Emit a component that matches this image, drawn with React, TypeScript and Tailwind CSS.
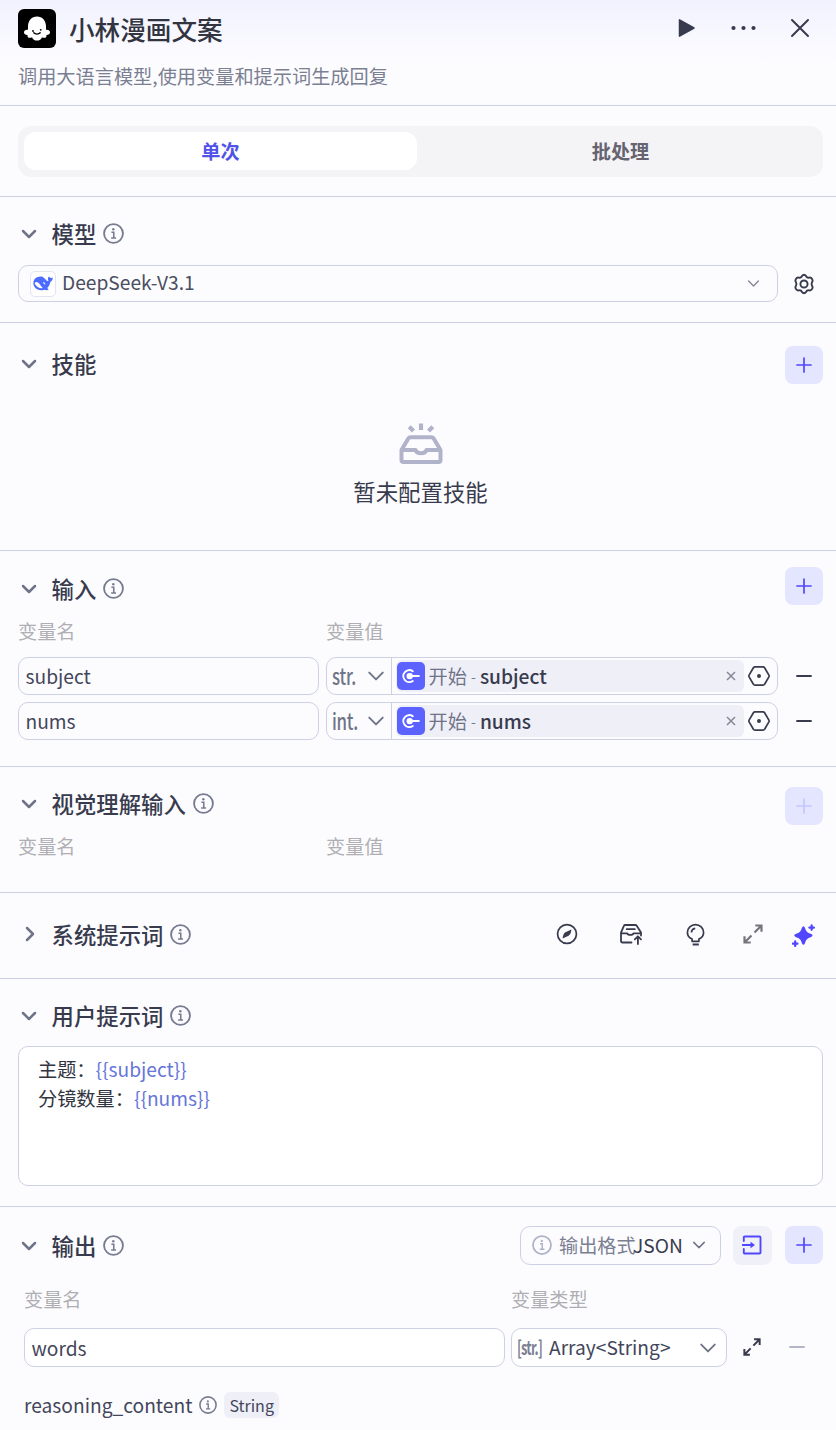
import type { ReactNode } from 'react';
import clsx from 'clsx';

type IconProps = { className?: string };

function InfoIcon({ className }: IconProps) {
  return (
    <svg viewBox="0 0 24 24" fill="none" className={clsx('shrink-0', className)} aria-hidden>
      <circle cx="12" cy="12" r="10.8" stroke="currentColor" strokeWidth="2.1" />
      <circle cx="11.8" cy="7.2" r="1.4" fill="currentColor" />
      <path d="M9.6 10.6h2.7v6.4M9.3 17.1h5.6" stroke="currentColor" strokeWidth="1.8" />
    </svg>
  );
}

function Chevron({ className, weight = 1.5 }: IconProps & { weight?: number }) {
  return (
    <svg viewBox="0 0 16 16" fill="none" className={clsx('shrink-0', className)} aria-hidden>
      <path
        d="M2 5l6 6 6-6"
        stroke="currentColor"
        strokeWidth={weight}
        strokeLinecap="round"
        strokeLinejoin="round"
      />
    </svg>
  );
}

function GhostLogo() {
  return (
    <svg viewBox="0 0 38 39" className="h-[39px] w-[38px] shrink-0 rounded-md bg-black" aria-hidden>
      <path
        d="M10 17.500C10 11.500 13.700 7.500 19 7.500S28 11.500 28 17.500V20.800C30 20.300 32 21.300 32 23.200C32 25.200 30.300 26 28.400 25.900C28.900 27.600 27.800 29 26 28.800C25.200 28.800 24.500 28.600 24 28.200C23.200 30.600 21.400 31.600 19 31.600S14.800 30.600 14 28.200C13.500 28.600 12.800 28.800 12 28.800C10.200 29 9.100 27.600 9.600 25.900C7.700 26 6 25.200 6 23.200C6 21.300 8 20.300 10 20.800Z"
        fill="#fff"
      />
      <path d="M15.800 23.800c1.500 1.700 4.900 1.700 6.400 0" stroke="#000" strokeWidth="1.300" strokeLinecap="round" fill="none" />
      <circle cx="15" cy="22" r=".9" fill="#000" />
      <circle cx="22.700" cy="20.800" r=".9" fill="#000" />
    </svg>
  );
}

function WhaleLogo() {
  return (
    <span className="flex h-[26px] w-[26px] shrink-0 items-center justify-center rounded-[5px] border border-[#e4e4f0] bg-white">
      <svg viewBox="0 0 20 15" className="h-[15px] w-5" aria-hidden>
        <path
          d="M19.800 1.600C19 2.200 18.300 2.100 17.600 1.700C16.700 1.300 16.200.9 15.700.4C14.700 1.800 14.700 3.400 15.500 4.900C14.700 5.300 13.700 4.700 13 3.900C12 2.700 10.800 1.900 9.600 1.600C10 1.300 10.500 1.200 11 1.100C8.100.1 4.100.5 1.900 2.700C-.2 5-.1 8.900 2 11.600C4.200 14.300 8 15 11.300 13.800C12.800 14.300 14.300 14.400 15.500 13.800C15.600 13.200 14.700 12.800 14.200 12.100C16 10.300 17 8.100 17.300 5.900C18.900 5.400 19.900 3.600 19.800 1.600Z"
          fill="#4d6bfe"
        />
        <path d="M1.800 6.800C2.300 5.700 4 5.700 5.400 6.700C7.300 8.100 8 10.600 9.800 12C7.500 12.800 4.900 11.600 3.400 9.800C2.400 8.600 1.600 7.700 1.800 6.800Z" fill="#fff" />
        <path d="M10 6c1.300.2 2.100 1.200 2.300 2.500c-1.100.1-2-.9-2.300-2.500z" fill="#fff" />
      </svg>
    </span>
  );
}

function PlusButton({ disabled }: { disabled?: boolean }) {
  return (
    <button
      type="button"
      disabled={disabled}
      aria-label="添加"
      className={clsx(
        'flex h-[38px] w-[38px] shrink-0 items-center justify-center rounded-lg bg-[#e4e5ff]',
        disabled ? 'text-[#c2c7ff]' : 'text-[#5147ff]'
      )}
    >
      <svg viewBox="0 0 16 16" fill="none" className="h-4 w-4">
        <path d="M8 1v14M1 8h14" stroke="currentColor" strokeWidth="1.700" strokeLinecap="round" />
      </svg>
    </button>
  );
}

function MinusIcon({ className }: IconProps) {
  return (
    <svg viewBox="0 0 16 16" fill="none" className={clsx('h-4 w-4 shrink-0', className)} aria-hidden>
      <path d="M1 8h14" stroke="currentColor" strokeWidth="1.800" strokeLinecap="round" />
    </svg>
  );
}

function ExpandIcon({ className }: IconProps) {
  return (
    <svg viewBox="0 0 20 20" fill="none" className={clsx('shrink-0', className)} aria-hidden>
      <path
        d="M11.500 8.500L18 2M12.300 1.500H18.500V7.700M8.500 11.500L2 18M7.700 18.500H1.500V12.300"
        stroke="currentColor"
        strokeWidth="2.200"
      />
    </svg>
  );
}

type SectionTitleProps = {
  title: string;
  info?: boolean;
  collapsed?: boolean;
};

function SectionTitle({ title, info = true, collapsed }: SectionTitleProps) {
  return (
    <div className="flex items-center">
      <span className={clsx('flex w-[33.500px] items-center text-[#6f7387]', collapsed ? 'pl-1' : 'pt-0.5 pl-[3px]')}>
        <Chevron weight={2.5} className={clsx('h-4 w-4', collapsed && '-rotate-90')} />
      </span>
      <h2 className="text-[22.400px] leading-[32px] font-medium text-[#383b4d]">{title}</h2>
      {info && <InfoIcon className="ml-[7px] h-[21px] w-[21px] text-[#767b90]" />}
    </div>
  );
}

function Section({ className, children }: { className?: string; children: ReactNode }) {
  return (
    <section className={clsx('flex flex-col border-b border-[#cdd1e3] pr-[13px] pl-[18px]', className)}>
      {children}
    </section>
  );
}

const fieldClass = 'rounded-[10px] border border-[#cdd1e3]';

const inputs = [
  { name: 'subject', type: 'str.' },
  { name: 'nums', type: 'int.' },
];

function InputRow({ name, type }: { name: string; type: string }) {
  return (
    <div className="flex h-[38px] items-center">
      <div className={clsx(fieldClass, 'flex h-full w-[301px] items-center pl-[6.500px] text-[#43465a]')}>{name}</div>
      <div className={clsx(fieldClass, 'ml-[7px] flex h-full w-[452px] items-center')}>
        <div className="flex h-full w-[65px] shrink-0 items-center justify-between border-r border-[#cdd1e3] pr-1.5 pl-[5px] text-[#6f7387]">
          <span className="-mt-[3px] w-[27px] origin-left scale-x-[.75] text-[22.400px] font-medium tracking-[-0.3px]">
            {type}
          </span>
          <Chevron weight={1.7} className="h-[18px] w-[18px]" />
        </div>
        <div className="ml-1 flex h-8 w-[348px] items-center rounded-md bg-[#efeff8] pl-px">
          <svg viewBox="0 0 28 28" fill="none" className="h-7 w-7 shrink-0 rounded-[5px] bg-[#5b62ff]" aria-hidden>
            <path d="M15.800 9.200A6 6 0 1 0 15.800 19" stroke="#fff" strokeWidth="2" strokeLinecap="round" />
            <circle cx="12.700" cy="14.100" r="3.200" fill="#fff" />
            <path d="M13 14.100h8.800" stroke="#fff" strokeWidth="2" strokeLinecap="round" />
          </svg>
          <div className="-mt-px flex items-center">
            <span className="ml-[3.500px] text-[#6f7387]">开始</span>
            <span className="w-[13px] text-center text-sm text-[#767b90]">-</span>
            <span className="font-medium text-[#383b4d]">{name}</span>
          </div>
          <svg viewBox="0 0 10 10" fill="none" className="mr-[8.500px] ml-auto h-2.5 w-2.5 text-[#868794]" aria-hidden>
            <path d="M1 1l8 8M9 1L1 9" stroke="currentColor" strokeWidth="1.500" />
          </svg>
        </div>
        <svg viewBox="0 0 24 24" fill="none" className="ml-[3px] h-6 w-6 text-[#383b4d]" aria-hidden>
          <path
            d="M8 2.800h8c.7 0 1.300.4 1.600 1l4.300 7.300c.3.600.3 1.200 0 1.800l-4.300 7.300c-.3.600-.9 1-1.600 1H8c-.7 0-1.300-.4-1.600-1l-4.300-7.300c-.3-.6-.3-1.200 0-1.800l4.300-7.300c.3-.6.9-1 1.600-1z"
            stroke="currentColor"
            strokeWidth="1.700"
          />
          <circle cx="12" cy="12" r="2" fill="currentColor" />
        </svg>
      </div>
      <MinusIcon className="ml-[18px] text-[#383b4d]" />
    </div>
  );
}

function PromptTools() {
  return (
    <div className="flex items-center text-[#383b4d]">
      <svg viewBox="0 0 24 24" fill="none" className="h-[22px] w-[22px]" aria-hidden>
        <circle cx="12" cy="12" r="10.300" stroke="currentColor" strokeWidth="1.900" />
        <path d="M16.800 7.200Q16.300 12.500 13.700 13.900L7.200 16.800Q7.700 11.500 10.300 10.100Z" fill="currentColor" />
      </svg>
      <svg viewBox="0 0 24 22" fill="none" className="ml-[41px] h-[22px] w-6" aria-hidden>
        <path
          d="M12.500 19.500H3.600C2.500 19.500 2 19 2 18V9.700L4.900 2.800C5.100 2.200 5.600 2 6.200 2H16.300C16.900 2 17.400 2.200 17.700 2.800L22 9.600V12.500M2.200 10.300H8.200C8.700 12.500 14 12.500 14.500 10.300H22M7.700 6.200H15.800M18.900 21V13.700M15.800 16.300L18.900 13.300L22 16.300"
          stroke="currentColor"
          strokeWidth="1.800"
          strokeLinecap="round"
          strokeLinejoin="round"
        />
      </svg>
      <svg viewBox="0 0 20 24" fill="none" className="ml-[43px] h-[23px] w-[19px]" aria-hidden>
        <path
          d="M6.400 19.200V16.900C3.500 15.600 1.500 13 1.500 9.900C1.500 5.300 5.300 1.500 10 1.500S18.500 5.300 18.500 9.900C18.500 13 16.500 15.600 13.600 16.900V19.200Z"
          stroke="currentColor"
          strokeWidth="1.800"
          strokeLinejoin="round"
        />
        <path d="M5.800 10C5.800 7.600 7.300 6 9.700 5.600M7 22.500H13.500" stroke="currentColor" strokeWidth="1.900" />
      </svg>
      <ExpandIcon className="ml-[38px] h-5 w-5 text-[#75767c]" />
      <svg viewBox="0 0 24 24" className="mt-[3px] ml-[29px] h-[23px] w-[23px] text-[#5147ff]" fill="currentColor" aria-hidden>
        <path d="M10.300 4Q12 .8 13.500 4Q14.600 9 19.500 10.200Q23.500 12 19.500 13.800Q14.600 15 13.500 20Q12 23.200 10.300 20Q9.300 15 4.300 13.800Q.3 12 4.300 10.200Q9.300 9 10.300 4Z" />
        <path
          d="M20.500 1.300v4.800M18.100 3.700h4.800M3.300 18.100v4.800M.9 20.500h4.800"
          stroke="currentColor"
          strokeWidth="2.300"
          strokeLinecap="round"
        />
      </svg>
    </div>
  );
}

function ColumnLabels({ className }: { className?: string }) {
  return (
    <div className={clsx('flex text-[#afafb3]', className)}>
      <span className="w-[308px]">变量名</span>
      <span>变量值</span>
    </div>
  );
}

export default function App() {
  return (
    <main className="h-[1430px] w-[836px] overflow-hidden bg-[#fcfcff] font-['Noto_Sans_CJK_SC',sans-serif] text-[19.200px] leading-7">
      <header className="flex h-[106px] flex-col border-b border-[#cdd1e3] bg-[linear-gradient(#f2f2ff_0px,#fcfcff_62px)] pt-[9px] pl-[18px]">
        <div className="flex h-[39px] items-center pr-[26px]">
          <GhostLogo />
          <h1 className="ml-[13px] text-[25.600px] leading-9 font-medium text-[#32343f]">小林漫画文案</h1>
          <div className="-mt-px ml-auto flex items-center text-[#383b4d]">
            <svg viewBox="0 0 18 20" className="h-5 w-[18px]" aria-hidden>
              <path d="M1.500 1.800L16 10L1.500 18.200Z" fill="currentColor" stroke="currentColor" strokeWidth="1.500" strokeLinejoin="round" />
            </svg>
            <svg viewBox="0 0 26 6" className="ml-[35px] h-1.5 w-[26px]" fill="currentColor" aria-hidden>
              <circle cx="2.500" cy="3" r="2.100" />
              <circle cx="12.500" cy="3" r="2.100" />
              <circle cx="22.500" cy="3" r="2.100" />
            </svg>
            <svg viewBox="0 0 20 20" fill="none" className="ml-[33px] h-5 w-5" aria-hidden>
              <path d="M2 2l16 16M18 2L2 18" stroke="currentColor" strokeWidth="2" strokeLinecap="round" />
            </svg>
          </div>
        </div>
        <p className="mt-[14px] text-[#7b7f92]">调用大语言模型,使用变量和提示词生成回复</p>
      </header>

      <Section className="h-[91px] pt-5">
        <div className="flex h-[51px] rounded-[13px] bg-[#f4f4f7] px-1.5 pt-1.5 pb-[7px] font-bold">
          <div className="flex w-[393px] items-center justify-center rounded-xl bg-white pb-px text-[#5153e8]">单次</div>
          <div className="flex flex-1 items-center justify-center pb-px pl-[7px] text-[#666471]">批处理</div>
        </div>
      </Section>

      <Section className="h-[126px] pt-5">
        <SectionTitle title="模型" />
        <div className="mt-4 flex items-center">
          <div className={clsx(fieldClass, 'flex h-[37px] w-[760px] items-center pr-[17px] pl-[11px] text-[#4b4e60]')}>
            <WhaleLogo />
            <span className="ml-1.5 pb-[3px]">DeepSeek-V3.1</span>
            <Chevron weight={1.7} className="ml-auto h-[13px] w-[13px] text-[#85889a]" />
          </div>
          <svg viewBox="0 0 24 24" fill="none" className="ml-[15px] h-[22px] w-[22px] text-[#383b4d]" aria-hidden>
            <path
              d="M9.700 3.500Q12 .5 14.300 3.500Q15.400 5.600 17.600 5Q19.900 4.700 21 6.900Q22 8.700 20.700 10.200Q19.700 12 20.700 13.800Q22 15.300 21 17.100Q19.900 19.300 17.600 19Q15.400 18.400 14.300 20.500Q12 23.500 9.700 20.500Q8.600 18.400 6.400 19Q4.100 19.300 3 17.100Q2 15.300 3.300 13.800Q4.300 12 3.300 10.200Q2 8.700 3 6.900Q4.100 4.700 6.400 5Q8.600 5.600 9.700 3.500Z"
              stroke="currentColor"
              strokeWidth="2.100"
              strokeLinejoin="round"
            />
            <circle cx="12" cy="12" r="3.900" stroke="currentColor" strokeWidth="2.100" />
          </svg>
        </div>
      </Section>

      <Section className="h-[228px] pt-[23px]">
        <div className="flex items-center justify-between">
          <div className="-mt-[5px]">
            <SectionTitle title="技能" info={false} />
          </div>
          <PlusButton />
        </div>
        <div className="mt-[39px] flex flex-col items-center">
          <svg viewBox="0 0 44 42" fill="none" className="h-[42px] w-11 text-[#b0b3c9]" aria-hidden>
            <path
              d="M2.500 27L9.300 15.600C9.800 14.700 10.500 14.300 11.500 14.300H32.500C33.500 14.300 34.200 14.700 34.700 15.600L41.500 27V37C41.500 38.300 40.800 39 39.500 39H4.500C3.200 39 2.500 38.300 2.500 37ZM2.500 27H16.500C18 31.300 26 31.300 27.500 27H41.500"
              stroke="currentColor"
              strokeWidth="4"
              strokeLinejoin="round"
            />
            <path d="M22 .5V7M10.200 3.700L14.500 8M33.800 3.700L29.500 8" stroke="currentColor" strokeWidth="4.200" />
          </svg>
          <p className="mt-2.5 text-[22.400px] leading-8 text-[#383b4d]">暂未配置技能</p>
        </div>
      </Section>

      <Section className="h-[216px] pt-4">
        <div className="flex items-center justify-between">
          <div className="pt-1">
            <SectionTitle title="输入" />
          </div>
          <PlusButton />
        </div>
        <ColumnLabels className="mt-3" />
        <div className="mt-3 flex flex-col gap-[7px]">
          {inputs.map((item) => (
            <InputRow key={item.name} {...item} />
          ))}
        </div>
      </Section>

      <Section className="h-[126px] pt-5">
        <div className="flex items-start justify-between">
          <SectionTitle title="视觉理解输入" />
          <PlusButton disabled />
        </div>
        <ColumnLabels className="mt-[7px]" />
      </Section>

      <Section className="h-[86px] pt-[25px]">
        <div className="flex h-8 items-center justify-between pr-2">
          <SectionTitle title="系统提示词" collapsed />
          <PromptTools />
        </div>
      </Section>

      <Section className="h-[228px] pt-5">
        <SectionTitle title="用户提示词" />
        <div className={clsx(fieldClass, 'mt-[15px] h-[140px] bg-white px-[19px] pt-2 leading-[28.800px] text-[#32343f]')}>
          <p>
            主题：<span className="text-[#6675d9]">{'{{subject}}'}</span>
          </p>
          <p>
            分镜数量：<span className="text-[#6675d9]">{'{{nums}}'}</span>
          </p>
        </div>
      </Section>

      <section className="flex h-[223px] flex-col pt-[19px] pr-[13px] pl-[18px]">
        <div className="flex h-[39px] items-start">
          <div className="pt-[3px]">
            <SectionTitle title="输出" />
          </div>
          <div className={clsx(fieldClass, 'ml-auto flex h-[39px] w-[201px] items-center pb-px pl-[11px]')}>
            <InfoIcon className="h-5 w-5 text-[#aeb2c7]" />
            <span className="ml-[7px] w-[74px] whitespace-nowrap text-[#7b7f92]">输出格式</span>
            <span className="text-[#383b4d]">JSON</span>
            <Chevron weight={1.7} className="ml-[9px] h-3.5 w-3.5 text-[#6f7387]" />
          </div>
          <button
            type="button"
            aria-label="导入"
            className="mr-[13px] ml-3 flex h-[39px] w-[39px] items-center justify-center rounded-lg bg-[#f0f0f8] pr-0.5 pb-px text-[#5147ff]"
          >
            <svg viewBox="0 0 20 20" fill="none" className="h-5 w-5">
              <path d="M1.800 6V2.500Q1.800 1.500 2.800 1.500H17.500Q18.500 1.500 18.500 2.500V17.500Q18.500 18.500 17.500 18.500H2.800Q1.800 18.500 1.800 17.500V14M.5 10H9" stroke="currentColor" strokeWidth="1.900" strokeLinecap="round" />
              <path d="M8.500 6.700L13 10L8.500 13.300Z" fill="currentColor" />
            </svg>
          </button>
          <PlusButton />
        </div>
        <div className="mt-5 flex pl-1.5 text-[#afafb3]">
          <span className="w-[487px]">变量名</span>
          <span>变量类型</span>
        </div>
        <div className="mt-[15px] flex h-[39px] items-center pl-1.5 text-[#43465a]">
          <div className={clsx(fieldClass, 'flex h-full w-[481px] items-center bg-white pl-[6.500px]')}>words</div>
          <div className={clsx(fieldClass, 'ml-1.5 flex h-full w-[216px] items-center bg-white pr-[9px] pl-[5px]')}>
            <span className="-mt-0.5 w-8 origin-left scale-x-[.67] font-bold tracking-[-1.2px] whitespace-nowrap text-[#7b7f92]">
              [str.]
            </span>
            <span className="-mt-px">Array&lt;String&gt;</span>
            <Chevron weight={1.7} className="ml-auto h-[18px] w-[18px] text-[#6f7387]" />
          </div>
          <ExpandIcon className="-mt-0.5 ml-4 h-[18px] w-[18px] text-[#383b4d]" />
          <MinusIcon className="-mt-0.5 ml-[28px] text-[#b3b6c9]" />
        </div>
        <div className="mt-6 flex items-center pl-1.5 text-[#43465a]">
          <span>reasoning_content</span>
          <InfoIcon className="ml-[7px] h-[18px] w-[18px] text-[#767b90]" />
          <span className="ml-[7px] flex h-[26px] items-center rounded-md bg-[#efeff8] px-[5px] text-base">String</span>
        </div>
      </section>
    </main>
  );
}
